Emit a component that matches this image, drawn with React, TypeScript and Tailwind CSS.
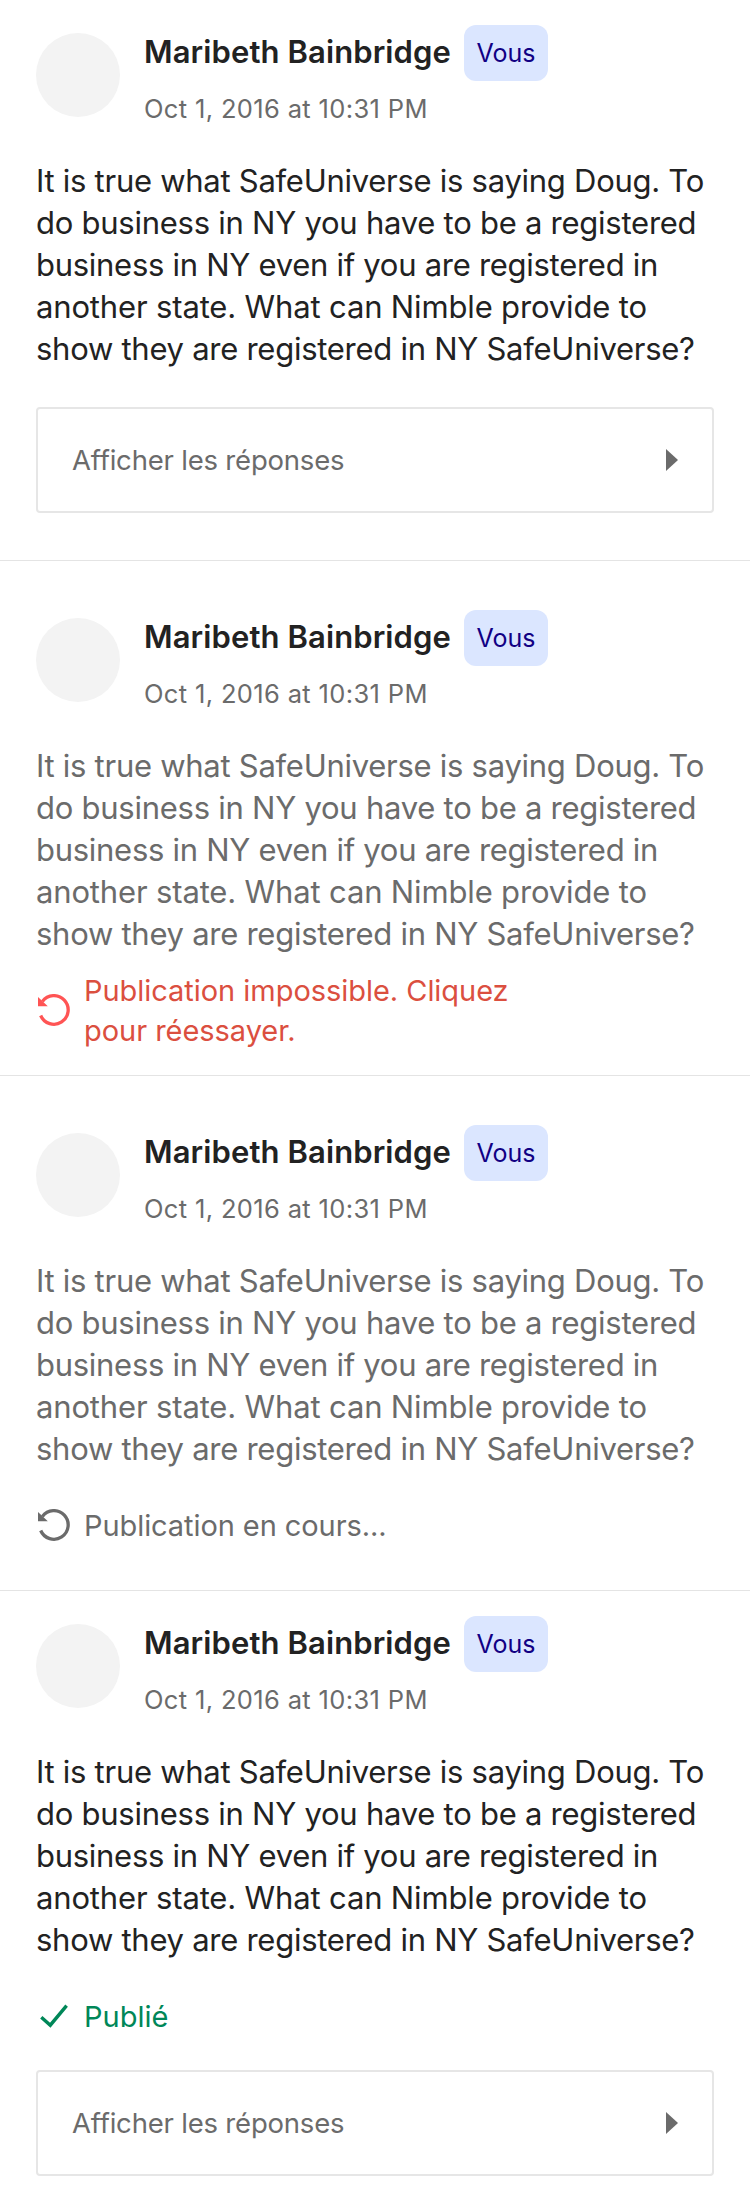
import React from "react";

type Status = "none" | "error" | "pending" | "published";

function Header() {
  return (
    <header className="flex h-[92px] items-start">
      <div className="mt-2 size-[84px] shrink-0 rounded-full bg-[#f3f3f3]" />
      <div className="ml-6 flex flex-col">
        <div className="flex h-14 items-center">
          <h2 className="w-80 whitespace-nowrap pb-0.5 text-[31px] leading-[54px] font-semibold tracking-[0.1px] text-[#222222]">
            Maribeth Bainbridge
          </h2>
          <span className="flex h-14 w-[84px] items-center justify-center rounded-xl bg-[#dbe6ff] pt-0.5 text-[25px] text-[#110084]">
            Vous
          </span>
        </div>
        <time className="mt-3 whitespace-nowrap text-[25.5px] leading-8 tracking-[0.35px] text-[#6b6b6b]">
          Oct 1, 2016 at 10:31 PM
        </time>
      </div>
    </header>
  );
}

function Body({ muted }: { muted: boolean }) {
  return (
    <p className={`mt-[43px] whitespace-nowrap text-[31px] leading-[42px] ${muted ? "text-[#6b6b6b]" : "text-[#222222]"}`}>
      <span className="tracking-[-0.27px]">It is true what SafeUniverse is saying Doug. To</span>
      <br />
      <span className="tracking-[-0.25px]">do business in NY you have to be a registered</span>
      <br />
      <span className="tracking-[-0.28px]">business in NY even if you are registered in</span>
      <br />
      <span className="tracking-[-0.15px]">another state. What can Nimble provide to</span>
      <br />
      <span className="tracking-[-0.27px]">show they are registered in NY SafeUniverse?</span>
    </p>
  );
}

function RetryIcon() {
  return (
    <svg width="32" height="32" viewBox="0 0 32 32" fill="none">
      <path d="M4.4 7.4A14.3 14.3 0 1 1 2.7 21.5" stroke="currentColor" strokeWidth="3.3" />
      <path d="M0 3v9.2h9.8z" fill="currentColor" />
    </svg>
  );
}

function Replies() {
  return (
    <button className="flex h-[106px] w-full items-center justify-between rounded border-2 border-[#e6e6e6] pr-[34px] pl-[34px] text-left text-[27.5px] tracking-[-0.2px] text-[#6b6b6b]">
      <span className="whitespace-nowrap pt-0.5">Afficher les réponses</span>
      <svg width="12" height="22" viewBox="0 0 12 22" fill="currentColor">
        <path d="M0 0l12 11L0 22z" />
      </svg>
    </button>
  );
}

function Comment({ status, className }: { status: Status; className: string }) {
  const muted = status === "error" || status === "pending";
  return (
    <article className={`px-9 ${className}`}>
      <Header />
      <Body muted={muted} />
      {status === "none" && <div className="mt-[37px]"><Replies /></div>}
      {status === "error" && (
        <div className="mt-[15px] flex h-20 items-center pl-0.5 text-[#ff5454]">
          <RetryIcon />
          <p className="ml-3.5 whitespace-nowrap pt-0.5 text-[29px] leading-10 tracking-[-0.04px] text-[#db4f3f]">
            Publication impossible. Cliquez
            <br />
            pour réessayer.
          </p>
        </div>
      )}
      {status === "pending" && (
        <div className="mt-[35px] flex h-10 items-center pl-0.5 text-[#6b6b6b]">
          <RetryIcon />
          <p className="ml-3.5 whitespace-nowrap pt-0.5 text-[29px] leading-10 tracking-[-0.08px]">Publication en cours...</p>
        </div>
      )}
      {status === "published" && (
        <>
          <div className="mt-[35px] flex h-10 items-center pl-1 text-[#008758]">
            <svg width="28" height="24" viewBox="0 0 28 24" fill="none">
              <path d="M1.3 13.2l9 8L26.6 1.6" stroke="currentColor" strokeWidth="3.4" />
            </svg>
            <p className="ml-4 pt-0.5 text-[29px] leading-10">Publié</p>
          </div>
          <div className="mt-[34px]"><Replies /></div>
        </>
      )}
    </article>
  );
}

export default function App() {
  return (
    <main className="h-[2200px] w-[750px] overflow-hidden bg-white font-['Inter',sans-serif]">
      <Comment status="none" className="h-[561px] border-b border-[#e4e4e4] pt-[25px]" />
      <Comment status="error" className="h-[515px] border-b border-[#e4e4e4] pt-[49px]" />
      <Comment status="pending" className="h-[515px] border-b border-[#e4e4e4] pt-[49px]" />
      <Comment status="published" className="pt-[25px]" />
    </main>
  );
}
